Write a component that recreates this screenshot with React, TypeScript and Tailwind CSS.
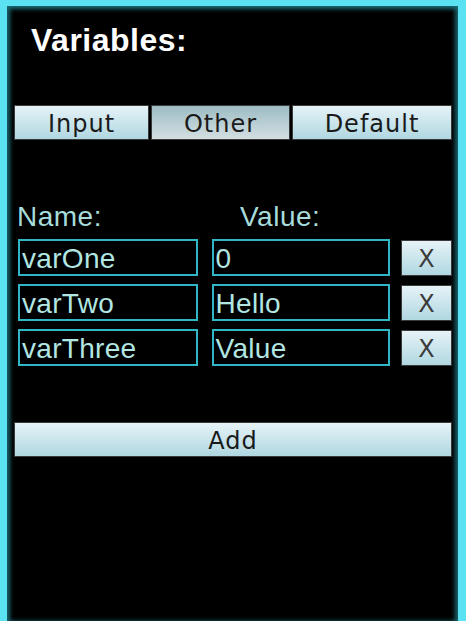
export default function App() {
  const rows = [
    { name: "varOne", value: "0" },
    { name: "varTwo", value: "Hello" },
    { name: "varThree", value: "Value" },
  ];
  const tabs = [
    { label: "Input", w: "w-[135px]", active: false },
    { label: "Other", w: "w-[139px]", active: true },
    { label: "Default", w: "w-[160px]", active: false },
  ];

  return (
    <div className="w-[466px] h-[621px] bg-[#5ae2f3] pt-[6px] pl-[7px] pr-[8px]">
      <div className="h-full bg-black shadow-[inset_3px_3px_4px_0_rgba(30,110,120,0.9),inset_-3px_0_4px_0_rgba(30,110,120,0.9)] pl-[7px] pr-[6px] font-['Liberation_Sans',Arial,sans-serif]">
        {/* Title */}
        <h1 className="pt-[16px] pl-[17px] text-[32px] leading-[36px] font-bold text-white tracking-[0.5px]">
          Variables:
        </h1>

        {/* Tabs */}
        <div className="mt-[47px] flex gap-[2px]">
          {tabs.map((t) => (
            <button
              key={t.label}
              className={`${t.w} h-[35px] pt-[2px] border border-[#3a3a3a] font-['DejaVu_Sans',Verdana,sans-serif] text-[24px] leading-none tracking-[1px] text-[#1a1a1a] ${
                t.active
                  ? "bg-gradient-to-b from-[#9dbcc4] to-[#d3dfe2]"
                  : "bg-gradient-to-b from-[#e6f3f7] to-[#b0d7e1]"
              }`}
            >
              {t.label}
            </button>
          ))}
        </div>

        {/* Labels */}
        <div className="mt-[62px] flex text-[28px] leading-[30px] text-[#a6dcdb] tracking-[0.5px]">
          <span className="w-[226px] pl-[3px]">Name:</span>
          <span>Value:</span>
        </div>

        {/* Rows */}
        <div className="mt-[7px] flex flex-col gap-[8px]">
          {rows.map((r) => (
            <div key={r.name} className="flex items-center">
              <div className="ml-[4px] w-[180px] h-[37px] border-2 border-[#31b6c6] flex items-center pl-[2px] pt-[2px] text-[28px] text-[#b2e6e2] tracking-[0.3px]">
                {r.name}
              </div>
              <div className="ml-[14px] w-[179px] h-[37px] border-2 border-[#31b6c6] flex items-center pl-[2px] pt-[2px] text-[28px] text-[#b2e6e2] tracking-[0.3px]">
                {r.value}
              </div>
              <button className="ml-[11px] w-[51px] h-[36px] pt-[2px] border border-[#3a3a3a] bg-gradient-to-b from-[#e6f3f7] to-[#b0d7e1] font-['DejaVu_Sans',Verdana,sans-serif] text-[24px] leading-none text-[#3a3a3a]">
                X
              </button>
            </div>
          ))}
        </div>

        {/* Add */}
        <button className="mt-[56px] w-full h-[35px] pt-[2px] border border-[#3a3a3a] bg-gradient-to-b from-[#e6f3f7] to-[#b0d7e1] font-['DejaVu_Sans',Verdana,sans-serif] text-[24px] leading-none tracking-[1px] text-[#1a1a1a]">
          Add
        </button>
      </div>
    </div>
  );
}
